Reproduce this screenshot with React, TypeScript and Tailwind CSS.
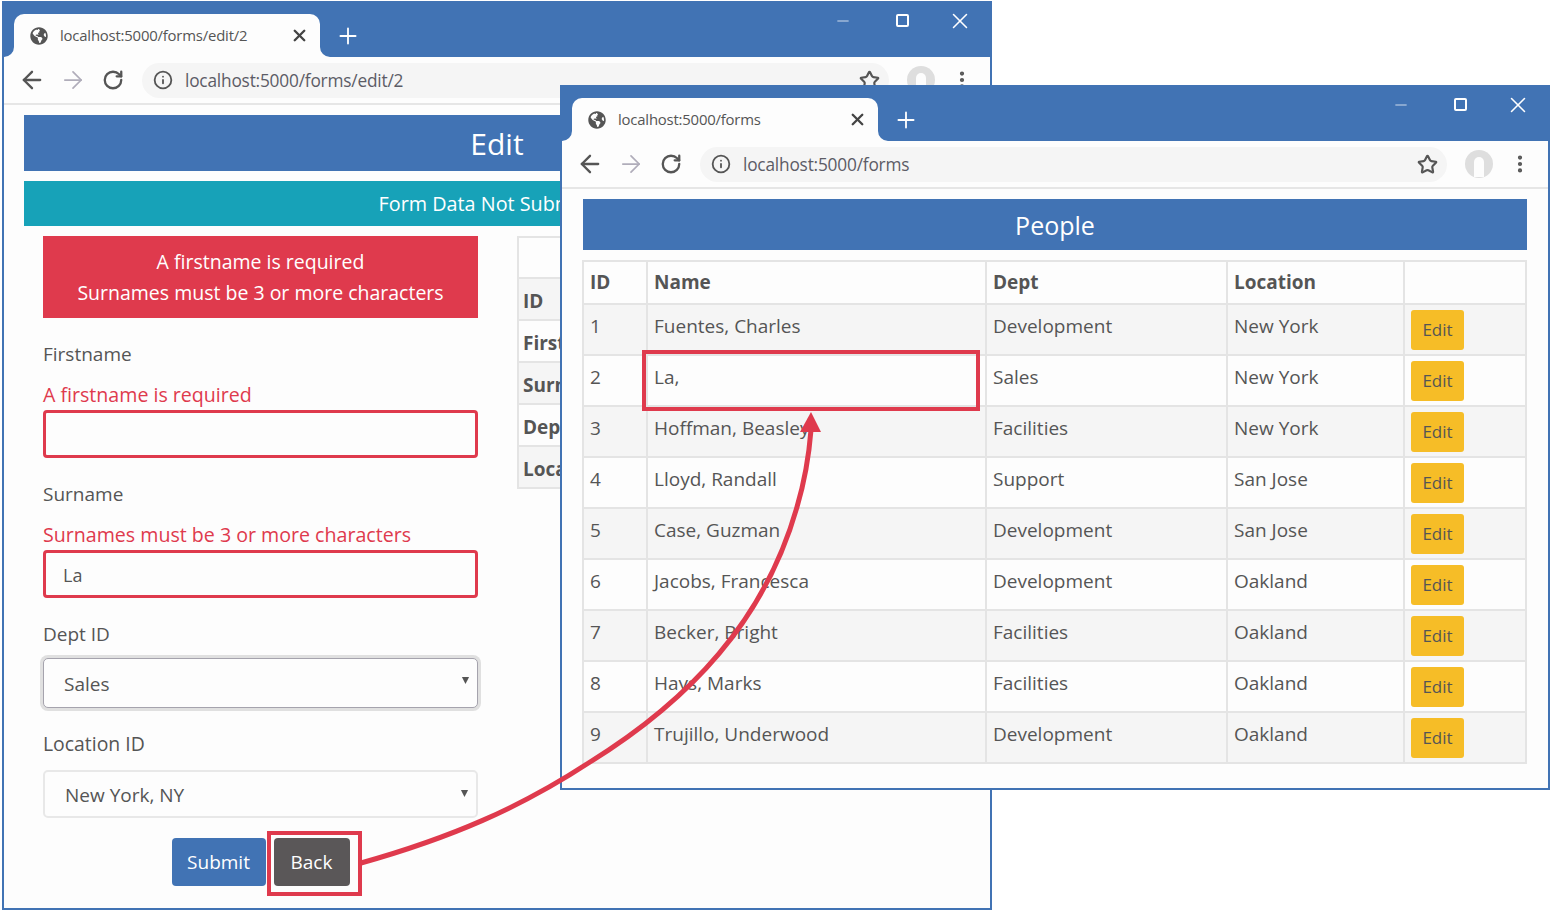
import type { ReactNode } from "react";
import { ArrowLeft, ArrowRight, Info, Minus, MoreVertical, Plus, RotateCw, Star, X } from "lucide-react";
import { FaGlobeAmericas } from "react-icons/fa";

const people = [
  ["1", "Fuentes, Charles", "Development", "New York"],
  ["2", "La,", "Sales", "New York"],
  ["3", "Hoffman, Beasley", "Facilities", "New York"],
  ["4", "Lloyd, Randall", "Support", "San Jose"],
  ["5", "Case, Guzman", "Development", "San Jose"],
  ["6", "Jacobs, Francesca", "Development", "Oakland"],
  ["7", "Becker, Bright", "Facilities", "Oakland"],
  ["8", "Hays, Marks", "Facilities", "Oakland"],
  ["9", "Trujillo, Underwood", "Development", "Oakland"],
];

function BrowserWindow({ url, className, children }: { url: string; className: string; children: ReactNode }) {
  return (
    <div className={`absolute flex flex-col overflow-hidden border-2 border-t-0 border-[#4173b4] bg-[#fdfdfd] ${className}`}>
      {/* Title bar */}
      <div className="flex h-[56px] shrink-0 items-end bg-[#4173b4] pl-[10px]">
        <div className="relative flex h-[43px] w-[306px] items-center rounded-t-[10px] bg-[#fdfdfd] pl-[16px] pr-[11px]">
          <svg className="absolute -left-[10px] bottom-0 h-[10px] w-[10px]" viewBox="0 0 10 10">
            <path d="M10 0A10 10 0 0 1 0 10H10Z" fill="#fdfdfd" />
          </svg>
          <svg className="absolute -right-[10px] bottom-0 h-[10px] w-[10px]" viewBox="0 0 10 10">
            <path d="M0 0A10 10 0 0 0 10 10H0Z" fill="#fdfdfd" />
          </svg>
          <FaGlobeAmericas className="h-[18px] w-[18px] text-[#555]" />
          <span className="ml-[12px] flex-1 text-[14.9px] tracking-[-0.2px] text-[#555]">{url}</span>
          <X className="h-[19px] w-[19px] text-[#444]" strokeWidth={3} />
        </div>
        <div className="flex h-[43px] w-[56px] items-center justify-center">
          <Plus className="h-[26px] w-[26px] text-white" strokeWidth={1.7} />
        </div>
        <div className="flex-1" />
        <div className="flex h-full items-start pt-[11px] pr-[21px] text-white">
          <Minus className="mr-[43px] h-[18px] w-[20px]" strokeWidth={1} />
          <div className="mr-[42px] mt-[2px] h-[13px] w-[13px] rounded-[2px] border-2 border-white" />
          <X className="-m-[4px] h-[26px] w-[26px]" strokeWidth={1.4} />
        </div>
      </div>
      {/* Toolbar */}
      <div className="flex h-[48px] shrink-0 items-center border-b-2 border-[#e6e6e6] pl-[14px] pr-[17px]">
        <ArrowLeft className="h-[28px] w-[28px] text-[#555]" strokeWidth={2} />
        <ArrowRight className="ml-[13px] h-[28px] w-[28px] text-[#b0adba]" strokeWidth={1.5} />
        <RotateCw className="ml-[15px] h-[22px] w-[22px] text-[#555]" strokeWidth={2.5} />
        <div className="ml-[18px] flex h-[35px] flex-1 items-center rounded-full bg-[#f5f5f5] pl-[11px] pr-[9px]">
          <Info className="h-[20px] w-[20px] text-[#555]" strokeWidth={2.2} />
          <span className="ml-[12px] flex-1 pt-[2px] text-[17.3px] tracking-[-0.2px] text-[#5c5c66]">{url}</span>
          <Star className="h-[21px] w-[21px] text-[#555]" strokeWidth={2.5} />
        </div>
        <div className="ml-[18px] flex h-[28px] w-[28px] items-center justify-center rounded-full bg-[#dedede]">
          <div className="mt-[6px] h-[20px] w-[10px] rounded-t-full bg-[#fdfdfd]" />
        </div>
        <MoreVertical className="ml-[16px] h-[22px] w-[22px] text-[#555]" strokeWidth={2.6} />
      </div>
      {children}
    </div>
  );
}

function TextInput({ value }: { value?: string }) {
  return (
    <div className="flex h-[48px] items-center rounded-[4px] border-[3px] border-[#df3a4d] bg-[#fdfdfd] pl-[17px] pt-[2px] text-[18px] text-[#555]">
      {value}
    </div>
  );
}

function SelectBox({ value, className }: { value: string; className: string }) {
  return (
    <div className={`relative flex items-center rounded-[5px] bg-[#fdfdfd] pl-[20px] pt-[2px] text-[19px] text-[#555] ${className}`}>
      {value}
      <svg viewBox="0 0 10 10" className="absolute right-[7px] top-[17px] h-[9px] w-[9px] fill-[#555]">
        <path d="M1 1h8L5 9z" />
      </svg>
    </div>
  );
}

function EditForm() {
  return (
    <div className="flex min-h-0 flex-1 flex-col px-[20px] pt-[10px]">
      <div className="flex h-[56px] shrink-0 items-center justify-center bg-[#4173b4] text-[30px] font-medium text-white">Edit</div>
      <div className="mt-[10px] flex h-[45px] shrink-0 items-center justify-center bg-[#17a2b8] pt-[1px] text-[19.8px] font-medium text-white">
        Form Data Not Submitted
      </div>
      <div className="mt-[10px] flex items-start">
        <div className="ml-[19px] w-[435px] shrink-0">
          <div className="flex h-[82px] flex-col items-center justify-center bg-[#df3a4d] text-[19.5px] font-medium leading-[31px] text-white">
            <div>A firstname is required</div>
            <div>Surnames must be 3 or more characters</div>
          </div>
          <div className="mt-[21px] text-[19px] leading-[30px] text-[#555]">Firstname</div>
          <div className="mt-[11px] text-[19.6px] font-medium leading-[30px] text-[#df3a4d]">A firstname is required</div>
          <TextInput />
          <div className="mt-[21px] text-[19px] leading-[30px] text-[#555]">Surname</div>
          <div className="mt-[11px] text-[19.6px] font-medium leading-[30px] text-[#df3a4d]">Surnames must be 3 or more characters</div>
          <TextInput value="La" />
          <div className="mt-[21px] text-[19px] leading-[30px] text-[#555]">Dept ID</div>
          <SelectBox value="Sales" className="mt-[9px] h-[50px] border border-[#a5a3ad] ring-[3px] ring-[#e0e0e0]" />
          <div className="mt-[21px] text-[19.4px] leading-[30px] text-[#555]">Location ID</div>
          <SelectBox value="New York, NY" className="mt-[11px] h-[48px] border-2 border-[#e8e8e8]" />
          <div className="mt-[20px] flex justify-center gap-[8px]">
            <div className="flex h-[48px] w-[94px] items-center justify-center rounded-[4px] bg-[#4173b4] text-[19px] text-white">Submit</div>
            <div className="flex h-[48px] w-[76px] items-center justify-center rounded-[4px] bg-[#5a5758] text-[19px] text-white">Back</div>
          </div>
        </div>
        {/* Summary table, mostly covered by the other window */}
        <div className="ml-[39px] w-[400px] shrink-0 border-l-2 border-[#e4e4e4] text-[19px] font-bold text-[#555]">
          <div className="h-[43px] border-y-2 border-[#e4e4e4] bg-[#fdfdfd]" />
          {["ID", "Firstname", "Surname", "Dept", "Location"].map((label, i) => (
            <div key={label} className={`flex h-[42px] items-center border-b-2 border-[#e4e4e4] pl-[4px] pt-[5px] ${i % 2 === 0 ? "bg-[#f5f5f5]" : "bg-[#fdfdfd]"}`}>
              {label}
            </div>
          ))}
        </div>
      </div>
    </div>
  );
}

function PeopleTable() {
  return (
    <div className="flex flex-1 flex-col px-[21px] pt-[10px]">
      <div className="flex h-[51px] shrink-0 items-center justify-center bg-[#4173b4] pt-[2px] text-[25px] font-medium text-white">People</div>
      <table className="-ml-px mt-[10px] w-[945px] table-fixed border-collapse text-[19px] text-[#555]">
        <thead>
          <tr className="h-[43px] font-bold">
            <th className="w-[64px] border-2 border-[#e4e4e4] pl-[6px] text-left">ID</th>
            <th className="w-[339px] border-2 border-[#e4e4e4] pl-[6px] text-left">Name</th>
            <th className="w-[241px] border-2 border-[#e4e4e4] pl-[6px] text-left">Dept</th>
            <th className="w-[177px] border-2 border-[#e4e4e4] pl-[6px] text-left">Location</th>
            <th className="border-2 border-[#e4e4e4]" />
          </tr>
        </thead>
        <tbody>
          {people.map((row, i) => (
            <tr key={row[0]} className={`h-[51px] ${i % 2 === 0 ? "bg-[#f5f5f5]" : "bg-[#fdfdfd]"}`}>
              {row.map((cell, j) => (
                <td key={j} className="border-2 border-[#e4e4e4] pb-[6px] pl-[6px]">
                  {cell}
                </td>
              ))}
              <td className="border-2 border-[#e4e4e4] pl-[6px]">
                <div className="flex h-[40px] w-[53px] items-center justify-center rounded-[3px] bg-[#f6bd27] text-[17px] text-[#555]">Edit</div>
              </td>
            </tr>
          ))}
        </tbody>
      </table>
    </div>
  );
}

export default function App() {
  return (
    <div className="relative h-[913px] w-[1553px] overflow-hidden bg-white font-['Open_Sans','Noto_Sans',sans-serif]">
      <BrowserWindow url="localhost:5000/forms/edit/2" className="left-[2px] top-[1px] h-[909px] w-[990px]">
        <EditForm />
      </BrowserWindow>
      <BrowserWindow url="localhost:5000/forms" className="left-[560px] top-[85px] h-[705px] w-[990px]">
        <PeopleTable />
      </BrowserWindow>

      {/* Callout boxes */}
      <div className="absolute left-[642px] top-[350px] h-[61px] w-[338px] border-[4px] border-[#df3a4d]" />
      <div className="absolute left-[267px] top-[831px] h-[65px] w-[95px] border-[4px] border-[#df3a4d]" />

      {/* Callout arrow */}
      <svg className="pointer-events-none absolute left-0 top-0 h-[913px] w-[1553px]" viewBox="0 0 1553 913">
        <path d="M361 863C450 838 520 808 590 762C690 700 765 620 797 507C805 480 809 455 811 430" fill="none" stroke="#df3a4d" strokeWidth="5" />
        <path d="M811 412L821 432H800Z" fill="#df3a4d" />
      </svg>
    </div>
  );
}
